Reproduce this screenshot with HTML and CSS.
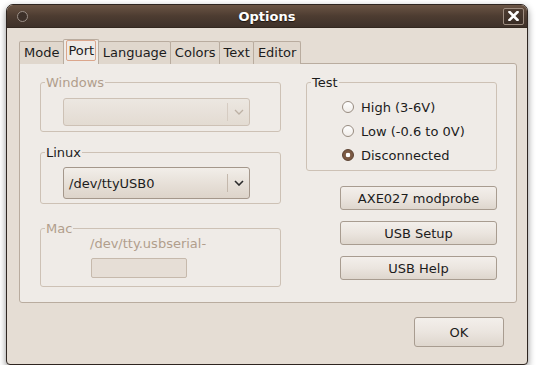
FILE: index.html
```html
<!DOCTYPE html>
<html lang="en">
<head>
  <meta charset="UTF-8" />
  <title>Options</title>
  <link rel="stylesheet" href="styles.css">
</head>
<body>

  <div class="window">
    <div class="titlebar">
      <span class="menu-btn"></span>
      <span class="title">Options</span>
      <span class="close-btn">
        <svg width="11" height="10" viewBox="0 0 11 10">
          <path d="M1.5 1 L9.5 9 M9.5 1 L1.5 9" stroke="#fff" stroke-width="2.6" stroke-linecap="square"/>
        </svg>
      </span>
    </div>

    <div class="client">
      <div class="tabs">
        <div class="tab">Mode</div>
        <div class="tab active"><span class="focus">Port</span></div>
        <div class="tab">Language</div>
        <div class="tab">Colors</div>
        <div class="tab">Text</div>
        <div class="tab">Editor</div>
      </div>

      <div class="panel">
        <div class="col-left">
          <fieldset class="frame disabled">
            <legend>Windows</legend>
            <div class="combo combo-off">
              <span class="combo-text"></span>
              <span class="combo-arrow">
                <svg width="10" height="6" viewBox="0 0 10 6"><path d="M1 1 L5 5 L9 1" fill="none" stroke="#bdb1a5" stroke-width="1.3"/></svg>
              </span>
            </div>
          </fieldset>

          <fieldset class="frame frame-linux">
            <legend>Linux</legend>
            <div class="combo combo-on">
              <span class="combo-text">/dev/ttyUSB0</span>
              <span class="combo-arrow">
                <svg width="10" height="6" viewBox="0 0 10 6"><path d="M1 1 L5 5 L9 1" fill="none" stroke="#2b2b2b" stroke-width="1.6"/></svg>
              </span>
            </div>
          </fieldset>

          <fieldset class="frame frame-mac disabled">
            <legend>Mac</legend>
            <div class="mac-prefix">/dev/tty.usbserial-</div>
            <div class="entry-off"></div>
          </fieldset>
        </div>

        <div class="col-right">
          <fieldset class="frame frame-test">
            <legend>Test</legend>
            <div class="radio-list">
              <div class="radio"><span class="dot"></span>High (3-6V)</div>
              <div class="radio"><span class="dot"></span>Low (-0.6 to 0V)</div>
              <div class="radio"><span class="dot checked"></span>Disconnected</div>
            </div>
          </fieldset>

          <div class="side-buttons">
            <button class="btn">AXE027 modprobe</button>
            <button class="btn">USB Setup</button>
            <button class="btn">USB Help</button>
          </div>
        </div>
      </div>

      <div class="actions">
        <button class="btn ok">OK</button>
      </div>
    </div>
  </div>

</body>
</html>
```

FILE: styles.css
```css
body {
  margin: 0;
  font-family: 'DejaVu Sans', sans-serif;
  font-size: 13px;
  color: #1c1c1c;
  background: #fff;
}

.window {
  width: 522px;
  height: 361px;
  box-sizing: border-box;
  margin: 4px 0 0 6px;
  border: 1px solid #2e2520;
  border-radius: 7px 7px 4px 4px;
  background: #e5ddd4;
  box-shadow: 0 3px 7px rgba(0, 0, 0, 0.45);
  display: flex;
  flex-direction: column;
  overflow: hidden;
}

.titlebar {
  height: 22px;
  display: grid;
  grid-template-columns: 1fr auto 1fr;
  align-items: center;
  background: linear-gradient(#6a5444, #4d3c31 50%, #3e3129);
  border-bottom: 1px solid #33281f;
}

.menu-btn {
  justify-self: start;
  margin-left: 10px;
  width: 9px;
  height: 9px;
  border-radius: 50%;
  background: #3d3029;
  border: 1px solid #9c9088;
}

.title {
  color: #fff;
  font-weight: bold;
  font-size: 13px;
  text-shadow: 0 1px 1px #1c140f;
}

.close-btn {
  justify-self: end;
  margin-right: 3px;
  width: 19px;
  height: 15px;
  border: 1px solid #9d8c7f;
  border-radius: 2px;
  background: linear-gradient(#4e3d32, #3a2d25);
  display: flex;
  align-items: center;
  justify-content: center;
}

.client {
  flex: 1;
  padding: 11px 9px 0 12px;
}

.tabs {
  display: flex;
  align-items: flex-end;
  height: 25px;
}

.tab {
  height: 22px;
  line-height: 21px;
  padding: 0 3.5px;
  border: 1px solid #b9ac9f;
  border-bottom: none;
  border-radius: 2px 2px 0 0;
  background: #e0d7cd;
  margin-right: -1px;
}

.tab:first-child {
  padding: 0 4px;
}

.tab.active {
  height: 24px;
  line-height: 22px;
  padding: 0 2px;
  background: #efebe7;
  position: relative;
  z-index: 1;
}

.tab.active .focus {
  display: inline-block;
  line-height: 19px;
  padding: 0 1px;
  border: 1px solid #dba68c;
  border-radius: 2px;
}

.panel {
  height: 240px;
  box-sizing: border-box;
  width: 498px;
  border: 1px solid #b9ac9f;
  border-radius: 0 3px 3px 3px;
  background: #efebe7;
  padding: 11px 19px 0 20px;
  display: flex;
  gap: 25px;
  margin-top: -1px;
}

.col-left {
  width: 241px;
}

.col-right {
  width: 191px;
}

.frame {
  margin: 0;
  padding: 0;
  min-width: 0;
  border: 1px solid #cdc1b5;
  border-radius: 3px;
}

.frame legend {
  margin-left: 4px;
  padding: 0 1px;
  line-height: 15px;
}

.frame.disabled legend,
.mac-prefix {
  color: #b19e8c;
}

.combo {
  margin-left: 22px;
  width: 187px;
  box-sizing: border-box;
  border-radius: 3px;
  display: flex;
  align-items: center;
}

.combo-off {
  height: 28px;
  margin-top: 8px;
  margin-bottom: 5px;
  border: 1px solid #cdc1b5;
  background: linear-gradient(#ece7e1, #e3dbd2);
}

.combo-on {
  height: 32px;
  margin-top: 7px;
  margin-bottom: 4px;
  border: 1px solid #a4978b;
  background: linear-gradient(#f2eee9, #e6dfd7 55%, #ddd4ca);
}

.combo-text {
  flex: 1;
  padding-left: 5px;
}

.combo-arrow {
  width: 21px;
  height: 18px;
  border-left: 1px solid #c4b8ac;
  display: flex;
  align-items: center;
  justify-content: center;
}

.combo-off .combo-arrow {
  border-left-color: #d6ccc2;
}

.frame-linux {
  margin-top: 13px;
}

.frame-mac {
  margin-top: 17px;
  padding-bottom: 8px;
}

.mac-prefix {
  padding-left: 49px;
  line-height: 15px;
}

.entry-off {
  margin: 7px 0 0 50px;
  width: 96px;
  height: 20px;
  box-sizing: border-box;
  border: 1px solid #c6b9ac;
  border-radius: 2px;
  background: #e6ded6;
}

.radio-list {
  padding: 5px 0 3px 35px;
}

.radio {
  height: 24px;
  display: flex;
  align-items: center;
  gap: 7px;
}

.dot {
  width: 12px;
  height: 12px;
  box-sizing: border-box;
  border-radius: 50%;
  border: 1px solid #978b80;
  background: linear-gradient(#ffffff, #f1ede9);
}

.dot.checked {
  border-color: #5a4030;
  background: radial-gradient(circle, #fff 0 2px, #7c5a44 2.6px);
}

.side-buttons {
  margin: 15px 0 0 34px;
  display: flex;
  flex-direction: column;
  gap: 11px;
}

.btn {
  font-family: 'DejaVu Sans', sans-serif;
  font-size: 13px;
  color: #1c1c1c;
  height: 24px;
  padding: 0;
  border: 1px solid #a89c90;
  border-radius: 3px;
  background: linear-gradient(#f3efeb, #ebe5df 50%, #ded6cd);
}

.actions {
  display: flex;
  justify-content: flex-end;
  padding-right: 14px;
  margin-top: 14px;
}

.btn.ok {
  width: 90px;
  height: 30px;
}
```
